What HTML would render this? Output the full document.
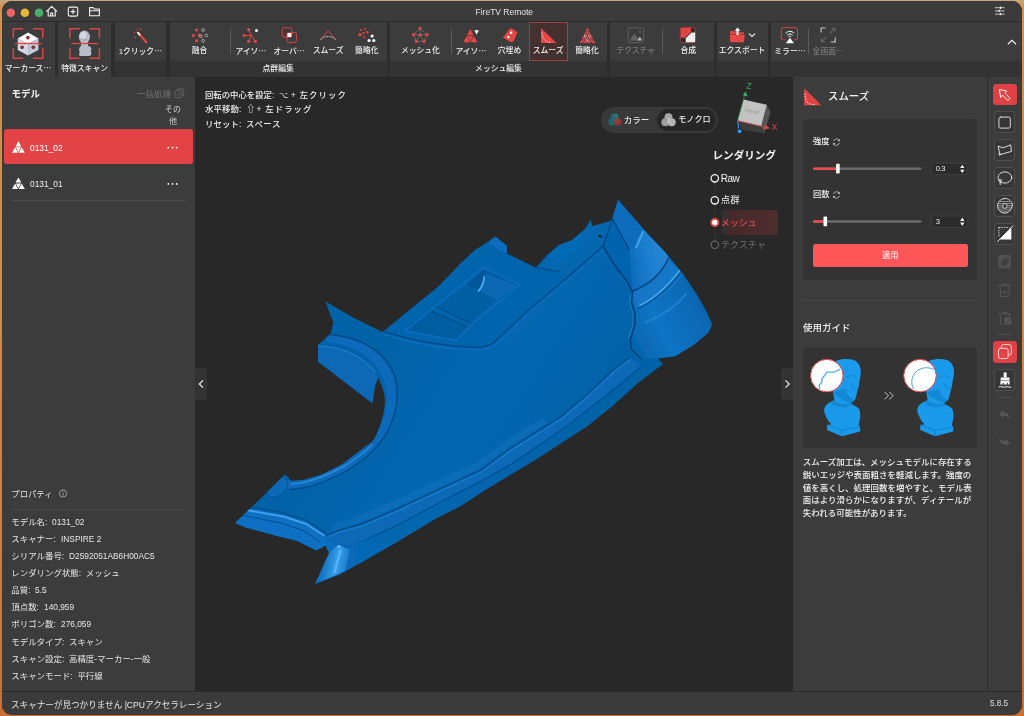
<!DOCTYPE html>
<html lang="ja">
<head>
<meta charset="utf-8">
<title>FireTV Remote</title>
<style>
*{box-sizing:border-box;margin:0;padding:0}
html,body{width:1024px;height:716px;overflow:hidden}
body{position:relative;font-family:"Liberation Sans","Noto Sans CJK JP",sans-serif;color:#e8e8e8;font-size:8px;
 background:linear-gradient(180deg,#c9a57e 0px,#d4904e 8px,#d28a44 300px,#cf7a38 600px,#cc6d33 716px);}
#win{position:absolute;left:1.500px;top:1.300px;width:1020.200px;height:713.400px;border-radius:10px;overflow:hidden;background:#3c3c3c}
#pg{position:absolute;left:-1.500px;top:-1.300px;width:1024px;height:716px;will-change:transform}
#pg div,#pg svg{position:absolute}
#pg .t{white-space:nowrap;line-height:12px;height:12px}
#pg .c{text-align:center;width:80px;margin-left:-40px}
.b{font-weight:bold}
.m{font-weight:500}
.lx{display:inline-block;font-size:1.110em;transform:scaleX(.890);transform-origin:0 70%;line-height:1}
.lc{transform-origin:50% 70%}
.v{font-size:8.400px;color:#f0f0f0}
.j{font-family:"Noto Sans CJK JP",sans-serif}
/* regions */
#title{left:0;top:0;width:1024px;height:21px;background:#3b3b3b}
#tline{left:0;top:21px;width:1024px;height:1px;background:#2a2a2a}
#tool{left:0;top:22px;width:1024px;height:55px;background:#2d2d2d}
#left{left:0;top:77px;width:195px;height:614px;background:#3c3c3c}
#view{left:195px;top:77px;width:598px;height:614px;background:#282828}
#right{left:793px;top:77px;width:194px;height:614px;background:#3c3c3c}
#rbar{left:987px;top:77px;width:37px;height:614px;background:#3c3c3c;border-left:1px solid #2c2c2c}
#sline{left:0;top:691px;width:1024px;height:1px;background:#2a2a2a}
#status{left:0;top:692px;width:1024px;height:24px;background:#3b3b3b}
/* toolbar */
.g{top:22px;height:39px;background:#3c3c3c}
.gl{top:61px;height:16px;background:#333;text-align:center;font-size:7.800px;line-height:16px;color:#ececec;font-weight:500}
.gf{top:22px;height:55px;background:#3c3c3c}
.sep{width:1px;top:29px;height:25px;background:#5c5c5c}
.tl{top:45px;font-size:7.800px;color:#f0f0f0;font-weight:500}
.dis{color:#7a7a7a}
.sel{left:529px;top:22px;width:39px;height:39px;background:#43302f;border:1px solid #9a4444}
/* left */
.row{left:4px;width:189px;height:35px;border-radius:3px}
.p{left:11.300px;font-size:8.450px;color:#e6e6e6}
/* right */
.card{background:#333;border-radius:3px}
.rb{left:993px;width:24px;height:22px;border-radius:3px;border:1px solid #5a5a5a;background:#353535}
.rb.on{background:#e04145;border-color:#e04145}
.rb.n{left:994px;width:21.400px;height:21.600px;border-color:#4e4e4e;background:#373737}
</style>
</head>
<body>
<div id="win"><div id="pg">
 <div id="title"></div><div id="tline"></div>
 <div id="tool"></div>
 <div id="left"></div>
 <div id="view"></div>
 <div id="right"></div>
 <div id="rbar"></div>
 <div id="sline"></div>
 <div id="status"></div>

<!-- 3D model -->
<svg id="model" style="left:0;top:0" width="1024" height="716" viewBox="0 0 1024 716">
 <defs>
  <linearGradient id="gMain" gradientUnits="userSpaceOnUse" x1="380" y1="330" x2="600" y2="470">
   <stop offset="0" stop-color="#0262a8"/><stop offset=".45" stop-color="#0467b0"/><stop offset="1" stop-color="#0261a6"/>
  </linearGradient>
  <linearGradient id="gCyl" gradientUnits="userSpaceOnUse" x1="632" y1="340" x2="712" y2="300">
   <stop offset="0" stop-color="#0566b0"/><stop offset=".35" stop-color="#0f74c4"/><stop offset=".75" stop-color="#0869b6"/><stop offset="1" stop-color="#0562aa"/>
  </linearGradient>
  <linearGradient id="gBand" gradientUnits="userSpaceOnUse" x1="625" y1="260" x2="675" y2="250">
   <stop offset="0" stop-color="#0a69b8"/><stop offset=".5" stop-color="#1d80d0"/><stop offset="1" stop-color="#2a8cd8"/>
  </linearGradient>
  <linearGradient id="gFoot" gradientUnits="userSpaceOnUse" x1="322" y1="560" x2="352" y2="566">
   <stop offset="0" stop-color="#0a6cbd"/><stop offset=".5" stop-color="#3a9fe8"/><stop offset="1" stop-color="#0b6dc0"/>
  </linearGradient>
  <linearGradient id="gFootFade" gradientUnits="userSpaceOnUse" x1="335" y1="0" x2="392" y2="0"><stop offset="0" stop-color="#0a6cbd"/><stop offset="1" stop-color="#0a6cbd" stop-opacity="0"/></linearGradient>
  <filter id="soft" x="-5%" y="-5%" width="110%" height="110%"><feGaussianBlur stdDeviation="0.55"/></filter>
  <clipPath id="sil"><path id="silp" d="M235,523 L265.700,493.600 L284.800,474.500 L288,477 L291,481 L304,480 L322,474.500 L342,464.500 L357,453 L372.500,441.500 C378,434 383,420 385,403.500 C385,397 384,392 382.500,388 L378.500,377.500 L375,386 L372.500,403.500 L318,361.500 L318,345 L331,333.500 L333.200,322 L325.200,301.200 L352,317 L382.500,332 L413,307 L438.500,286.500 L460,264 L475,250 L488,242 L495.500,236.500 L507,246 L507,253.500 L536,267.500 L546,256 L559,245 L572,240 L584.500,229.500 L591,219.500 L592,226 L598.500,224.500 L610,221 L612.500,218 L618,199.700 L644.600,230.600 L665.900,253.100 L682.500,273.300 L696.800,294.600 L706.300,311.300 L712.200,324.300 L708.600,332.600 L694.400,344.500 L675.400,356.300 L658,358.500 L663,364 L638,383 L612.500,406 L587,426.500 L561.500,443 L536,459.500 L511,474.500 L485.500,490 L460,506.500 L436,518.500 L398,541.500 L362,562 L339.500,574.500 L315,584 L329,553 L325.500,545.500 L316.500,550.500 L296,540.500 L278.500,536.500 L260.500,531.500 L245.500,527.500 Z"/></clipPath>
 </defs>
 <use href="#silp" fill="url(#gMain)"/>
 <g clip-path="url(#sil)"><g filter="url(#soft)" fill="none" stroke-linecap="round" stroke-linejoin="round">
  <!-- cylinder -->
  <path fill="url(#gCyl)" d="M603,246 L612.500,218 L618,199.700 L644.600,230.600 L665.900,253.100 L682.500,273.300 L696.800,294.600 L706.300,311.300 L712.200,324.300 L708.600,332.600 L694.400,344.500 L675.400,356.300 L656.400,358.700 L641,358.700 L631.500,349.200 L630.300,339.700 L635,324.300 L635,313.600 L631.500,301.800 L632.700,292.300 L628,282.800 L613.700,263.800 Z"/>
  <path fill="url(#gBand)" d="M612.500,218.700 L618,199.700 L644.600,230.600 L665.900,253.100 L668.300,257.900 C664,270 655,280 632.700,291 L628,282.800 L613.700,263.800 L603,246 Z"/>
  <path fill="#0664ad" d="M603,246 L612.500,218.700 L618,199.700 L629.100,249.600 L632.700,291 L628,282.800 L613.700,263.800 Z"/>
  <path fill="#0b6cbc" d="M618,199.700 L644.600,230.600 L636.300,248 L629.100,249.600 L612.500,218.700 Z"/>
  <path stroke="#3a9ce4" stroke-width="2.600" d="M642.800,232 L636.300,247.200"/>
  <path stroke="#04457f" stroke-width="1.300" d="M612.500,218.700 L629.100,249.600 M603,246 L612.500,219"/>
  <ellipse cx="600.400" cy="236.400" rx="2.200" ry="1.100" fill="#282828" transform="rotate(20 600.400 236.400)"/>
  <path fill="#1677c8" d="M632.700,293 C652,285 663,272 668.300,259 L682.500,273.300 C676,287 660,300 637.500,308.900 Z"/>
  <path stroke="#04457f" stroke-width="1.400" d="M632.700,291 C652,283 663,271 668.300,257.900"/>
  <path stroke="#05508f" stroke-width="1.200" d="M637.500,308.900 C656.400,300 670.700,286 681.300,272.100"/>
  <path stroke="#45a6ec" stroke-width="1.500" d="M640,305.300 C657,297 669.500,284 679.500,270.500"/>
  <path stroke="#2487d4" stroke-width="2.500" d="M646,322 C662,316 676,306 686,294" opacity=".7"/>
  <path stroke="#043f76" stroke-width="1.500" d="M603,246 L613.700,263.800 L628,282.800 L632.700,292.300 L631.500,301.800 L635,313.600 L635,324.300 L630.300,339.700 L631.500,349.200 L641,358.700"/>
  <path stroke="#1b7ccb" stroke-width="1" d="M631,294 L629.500,302 L633,313.600 L633,324 L628.500,339"/>
  <!-- box -->
  <path fill="#0465ad" d="M384.700,331.700 L413,307 L438.500,286.500 L460,264 L475,250 L488,242 L495.500,236.500 L507,246 L507,253.500 L536,267.500 L570,275 L526.400,312.100 L497,339.500 C495,342 490,346 479.500,347.300 C440,347 410,340 384.700,331.700Z"/>
  <path fill="#0a6cbc" d="M488,242 L495.500,236.500 L507,246 L507,253.500 L499,250 Z"/>
  <path fill="#035da0" d="M405.200,330.700 L431.600,311.100 L467.800,326.800 L456,340.500 Z"/>
  <path fill="#035ea2" d="M436.500,307.200 L465.800,285.700 L497,299.400 L471.700,323.800 Z"/>
  <path fill="#035798" d="M465.800,284.700 L483.400,270 L517.600,285.700 L497,300.400 Z"/>
  <path fill="#0868b4" d="M486,273 L517.600,285.700 L497,300.400 L479,291 Z"/>
  <path stroke="#4ab6ff" stroke-width="1.700" d="M484.300,277 C483.500,283 481.500,288 478.500,290.800"/>
  <path stroke="#0a6cbc" stroke-width="1.800" d="M405,331 L483.400,267.100 L519.600,284.700 L471.700,323.800 L456,340.500 Z"/>
  <path stroke="#034a85" stroke-width="1" d="M431.600,311.100 L467.800,326.800 M436.500,307.200 L471.700,323.800"/>
  <path stroke="#034a85" stroke-width="1.300" d="M384.700,331.700 C410,340 440,347 479.500,347.300 C490,346 495,342 497,339.500 L526.400,312.100 L570,275 L603,246"/>
  <path stroke="#0a6dbe" stroke-width="1.500" d="M384.700,334.200 C410,342.700 440,349.700 480,350 C491,348.700 496.500,344.700 499,341.700 L528,314.200 L571.500,277.200 L603,250"/>
  <path stroke="#034a85" stroke-width="1.200" d="M507,253.500 L536,267.500 M546,256 L536,267.500 L560,272"/>
  <path fill="#0a6cbc" d="M546,256 L559,245 L572,240 L584.500,229.500 L580,247 L560,262 Z" opacity=".6"/>
  <!-- wing + arc rim -->
  <path fill="#0868b6" d="M317.300,344.400 L317.300,361.500 L372.500,403.500 L375,386 L378.500,377.500 C365,355 345,346 317.300,344.400 Z"/>
  <path stroke="#0a6aba" stroke-width="9" d="M330,338 C372,343 392,370 391.500,398 C391,425 375,447 347,465 C325,478 305,484 288,484.500"/>
  <path stroke="#034a85" stroke-width="1.300" d="M330.500,334.500 C380,340 397,368 397.500,392 C397,428 378,452 349,469.500 C325,483 305,489 290,489.500"/>
  <path stroke="#2a8ad8" stroke-width="1.600" d="M291,484 C305,483.500 325,477 347,464.500 C357,458 365,452 372,445"/>
  <path stroke="#2080d0" stroke-width="1.200" d="M318.500,346 C345,347 362,356 375,372"/>
  <ellipse cx="277" cy="487" rx="12" ry="8.500" fill="#0768b5" stroke="#04508f" stroke-width=".9" stroke-opacity=".7" transform="rotate(-40 277 487)"/>
  <path stroke="#1478c8" stroke-opacity=".35" stroke-linecap="butt" stroke-width="7" d="M332,528 L362,518 L397,503 L435,485.500 L478,465.500 L508,443.500 L545,420"/>
  <!-- bottom trim -->
  <path fill="#0768b6" d="M325.400,536 L339.400,530.100 L362.200,523.800 L397.800,508.600 L435.800,490.800 L480,470.500 L510.800,447.900 L561.600,416.200 L587,394.600 L612.400,370.500 L628.900,357.800 L642.800,365.400 L612.400,390.800 L561.600,430.100 L510.800,464.400 L480,481.900 L435.800,504.800 L397.800,525 L362.200,541.600 L341.900,549.200 Z"/>
  <path stroke="#034a85" stroke-width="1.200" d="M325.400,536 L339.400,530.100 L362.200,523.800 L397.800,508.600 L435.800,490.800 L480,470.500 L510.800,447.900 L561.600,416.200 L587,394.600 L612.400,370.500 L628.900,357.800"/>
  <path stroke="#1a7ccc" stroke-width="1.300" d="M326,538 L340,532.100 L363,525.800 L398.500,510.600 L436.500,492.800 L481,472.500 L512,449.900 L562.600,418.200 L588,396.600 L613.400,372.500 L630,359.800"/>
  <path stroke="#044f8e" stroke-width="1.200" d="M341.900,549.200 L362.200,541.600 L397.800,525 L435.800,504.800 L480,481.900 L510.800,464.400 L561.600,430.100 L612.400,390.800 L642.800,365.400"/>
  <!-- foot -->
  <path fill="url(#gFootFade)" d="M325.400,536 L341.900,549.200 L395,527 L395,545 L339.500,574.500 L315,584 L329,553 Z"/>
  <path fill="url(#gFoot)" d="M329,553 L338,545 L350,550 L345,571 L315,584 Z"/>
  <path fill="#0c6fc2" d="M235,523 L248,508.600 L283.500,515 L306.300,522.500 L325.400,536 L329,553 L325.500,545.500 L316.500,550.500 L296,540.500 L278.500,536.500 L260.500,531.500 L245.500,527.500 Z"/>
  <path stroke="#3fa0ee" stroke-width="1.900" d="M246,510 L283.500,516.500 L306.300,524 L324,535.500"/>
  <path stroke="#034a85" stroke-width="1.100" d="M250,506.500 L284,513 L307,520.500 L326,533"/>
  <path stroke="#04508f" stroke-width="1" d="M243,515.500 L281,523 L304,531 L320,542"/>
  <path stroke="#55b4ff" stroke-width="2.400" d="M340.500,551 C338,559 336.500,565 334.500,572"/>
  <circle cx="339" cy="546.500" r="1.500" fill="#62bcff"/>
 </g></g>
</svg>

<!-- title bar -->
<svg style="left:0;top:0" width="1024" height="22" viewBox="0 0 1024 22">
 <circle cx="10.8" cy="12.8" r="4.3" fill="#ea6468"/>
 <circle cx="24.9" cy="12.8" r="4.3" fill="#e6b83a"/>
 <circle cx="39" cy="12.8" r="4.3" fill="#4caf69"/>
 <g fill="none" stroke="#f2f2f2" stroke-width="1.1" stroke-linejoin="round" stroke-linecap="round">
  <path d="M46.600,11.300 L51.700,6.300 L56.800,11.300 M48.200,10.600 V16 H55.200 V10.600 M50.700,16 V13 H52.700 V16"/>
  <rect x="68.300" y="7.100" width="9.400" height="9" rx="1.600"/>
  <path d="M73,9.600 V13.600 M71,11.600 H75"/>
  <path d="M89.600,15.800 V7.600 H93.200 L94.400,9 H99.400 V15.800 Z M89.600,10.800 H99.400"/>
 </g>
 <g stroke="#c8c8c8" stroke-width="1" fill="none">
  <path d="M995,7.700 H1004.500 M995,10.900 H1004.500 M995,14.100 H1004.500"/>
  <path d="M1000.500,6.500 V8.900 M999.200,9.700 V12.100 M1000.500,12.900 V15.300" stroke="#f0f0f0" stroke-width="1.200"/>
 </g>
</svg>
<div class="t c" style="left:504.500px;top:5.500px;font-size:8.600px;color:#e4e4e4"><span class="lx lc">FireTV Remote</span></div>

<!-- toolbar groups -->
<div class="gf" style="left:0;width:54.500px"></div>
<div class="gf" style="left:58px;width:53px"></div>
<div class="g" style="left:115px;width:51px"></div><div class="gl" style="left:115px;width:51px"></div>
<div class="g" style="left:169.500px;width:217.300px"></div><div class="gl" style="left:169.500px;width:217.300px">点群編集</div>
<div class="g" style="left:390px;width:217px"></div><div class="gl" style="left:390px;width:217px">メッシュ編集</div>
<div class="g" style="left:610px;width:103.700px"></div><div class="gl" style="left:610px;width:103.700px"></div>
<div class="g" style="left:717px;width:51px"></div><div class="gl" style="left:717px;width:51px"></div>
<div class="g" style="left:771.300px;width:253px"></div><div class="gl" style="left:771.300px;width:253px"></div>
<div class="sel"></div>
<div class="sep" style="left:230.300px"></div>
<div class="sep" style="left:451px"></div>
<div class="sep" style="left:661.500px"></div>
<div class="sep" style="left:808.200px"></div>
<!-- labels -->
<div class="t c tl" style="left:28px;top:62.200px">マーカース<span class="j">…</span></div>
<div class="t c tl" style="left:84.600px;top:63px">特徴スキャン</div>
<div class="t c tl" style="left:140.300px">1クリック<span class="j">…</span></div>
<div class="t c tl" style="left:199.500px">融合</div>
<div class="t c tl" style="left:250.800px">アイソ<span class="j">…</span></div>
<div class="t c tl" style="left:289px">オーバ<span class="j">…</span></div>
<div class="t c tl" style="left:328.200px">スムーズ</div>
<div class="t c tl" style="left:366.800px">簡略化</div>
<div class="t c tl" style="left:420.400px">メッシュ化</div>
<div class="t c tl" style="left:470.800px">アイソ<span class="j">…</span></div>
<div class="t c tl" style="left:509.500px">穴埋め</div>
<div class="t c tl" style="left:548.200px">スムーズ</div>
<div class="t c tl" style="left:587px">簡略化</div>
<div class="t c tl dis" style="left:635.800px">テクスチャ</div>
<div class="t c tl b" style="left:688.200px">合成</div>
<div class="t c tl b" style="left:742px">エクスポート</div>
<div class="t c tl b" style="left:789.900px">ミラー<span class="j">…</span></div>
<div class="t c tl dis" style="left:828.200px">全画面<span class="j">…</span></div>
<!-- icons -->
<svg style="left:0;top:22px" width="1024" height="40" viewBox="0 22 1024 40">
 <!-- marker scan -->
 <g fill="none" stroke="#de4343" stroke-width="1.500" stroke-linejoin="round" stroke-linecap="round">
  <path d="M13.300,37.500 V28.800 H22.500 M33.500,28.800 H42.800 V37.500 M42.800,49 V58.200 H33.500 M22.500,58.200 H13.300 V49"/>
  <path d="M69.900,37.500 V28.800 H79.100 M90.100,28.800 H99.400 V37.500 M99.400,49 V58.200 H90.100 M79.100,58.200 H69.900 V49"/>
 </g>
 <path d="M28.100,32.400 L38.500,38.400 L28.100,44 L17.700,38.400 Z" fill="#fbfbfd"/>
 <path d="M17.700,38.400 L28.100,44 V55.400 L17.700,49.900 Z" fill="#d4d8e6"/>
 <path d="M38.500,38.400 L28.100,44 V55.400 L38.500,49.900 Z" fill="#c3c7dc"/>
 <g fill="#c02a2a" stroke="#5a1515" stroke-width=".8"><circle cx="27.900" cy="37.700" r="1.400"/><circle cx="22.100" cy="47.300" r="1.400"/><circle cx="33.300" cy="47.300" r="1.400"/></g>
 <path d="M14.700,43.500 H41.700" stroke="#e04545" stroke-width="1.300"/>
 <!-- bust -->
 <g fill="#b9bcc6">
  <ellipse cx="84.400" cy="37" rx="5.600" ry="6.400"/>
  <path d="M81.300,42 H87.500 L88.200,46 C91.500,46.500 92,49 90.800,52 C92,53 91.500,55.500 89.500,56 H80.500 C78.500,55.500 78.700,53.500 79.800,52.500 C78.500,49.500 79,47 81,46 Z"/>
 </g>
 <ellipse cx="83.200" cy="35.600" rx="3.400" ry="3.800" fill="#d3d6de"/>
 <path d="M81.500,38.200 C82.500,40.800 85.500,40.800 87,38.500" stroke="#8e929e" stroke-width=".8" fill="none"/>
 <path d="M71.300,43.500 H98" stroke="#e04545" stroke-width="1.300"/>
 <!-- wand -->
 <path d="M138.200,33 L146.400,42.200" stroke="#e04545" stroke-width="2.200" stroke-linecap="round"/>
 <path d="M137.800,32.600 L139.800,34.800" stroke="#fff" stroke-width="1.600" stroke-linecap="round"/>
 <g fill="#e04545"><circle cx="134.400" cy="32.400" r=".8"/><circle cx="140.500" cy="29.200" r=".9"/><circle cx="135.200" cy="37.400" r=".8"/><circle cx="136.600" cy="29.600" r=".6"/></g>
 <!-- fuse -->
 <g fill="#e84545"><circle cx="196.600" cy="30" r="1.600"/><circle cx="193.500" cy="35.500" r="1.600"/><circle cx="199.300" cy="35.100" r="1.600"/><circle cx="196.600" cy="40.800" r="1.600"/></g>
 <g fill="none" stroke="#b8b8b8" stroke-width=".8"><circle cx="203.100" cy="30" r="1.400"/><circle cx="206.400" cy="35.500" r="1.400"/><circle cx="200.900" cy="36.300" r="1.400"/><circle cx="203.100" cy="40.800" r="1.400"/></g>
 <!-- isolated pts -->
 <g stroke="#e84545" stroke-width="1" fill="none"><path d="M248.600,29.600 L251.500,35.500 L255.400,41.300 M244.200,35.500 H251.500 L248.600,41.300"/></g>
 <g fill="#e84545"><circle cx="248.600" cy="29.600" r="1.600"/><circle cx="244.200" cy="35.500" r="1.600"/><circle cx="248.600" cy="41.300" r="1.600"/><circle cx="255.400" cy="41.300" r="1.600"/></g>
 <circle cx="256.500" cy="30.400" r="1.500" fill="#fff"/>
 <!-- overlap -->
 <g fill="none" stroke="#d84444" stroke-width="1"><rect x="282.200" y="27.700" width="9.700" height="9.600" rx="2"/><rect x="286.900" y="32.600" width="9.700" height="9.800" rx="2"/></g>
 <rect x="287.400" y="33.100" width="4" height="3.900" fill="#fff"/>
 <!-- smooth pts -->
 <path d="M320.200,39.800 L328.100,30.800 L336.100,39.800" fill="none" stroke="#d84444" stroke-width="1"/>
 <path d="M320.600,39.700 C324,35.300 332,35.300 335.700,39.700" fill="none" stroke="#ddd" stroke-width="1" stroke-dasharray="1.300 1"/>
 <!-- simplify pts -->
 <g fill="#e84545"><circle cx="360.700" cy="30" r="1.100"/><circle cx="364.800" cy="28.800" r="1"/><circle cx="363.500" cy="33.100" r="1.200"/><circle cx="367.400" cy="32.300" r="1.200"/><circle cx="360" cy="34.700" r="1.600"/><circle cx="364.200" cy="37.300" r="1"/></g>
 <g fill="#fff"><circle cx="372.100" cy="36.100" r="1.600"/><circle cx="369.100" cy="40.500" r="1.600"/><circle cx="373.800" cy="40.500" r="1.600"/></g>
 <!-- mesh-ify -->
 <path d="M420.200,28.400 L427.200,34.700 L424,41.300 H416.400 L413.500,34.700 Z M420.200,28.400 V34.900 M413.500,34.700 L420.200,34.900 L427.200,34.700 M416.400,41.300 L420.200,34.900 L424,41.300" fill="none" stroke="#9a9a9a" stroke-width=".8" stroke-dasharray="1.200 .9"/>
 <g fill="#e84545"><circle cx="420.200" cy="28.400" r="1.600"/><circle cx="413.500" cy="34.700" r="1.600"/><circle cx="427.200" cy="34.700" r="1.600"/><circle cx="416.400" cy="41.300" r="1.600"/><circle cx="424" cy="41.300" r="1.600"/><circle cx="420.200" cy="34.900" r="1.600"/></g>
 <!-- isolated mesh -->
 <path d="M470.300,29 L477.300,42.200 H463.300 Z" fill="#e84545"/>
 <path d="M466.800,35.600 H473.800 L470.300,42.200 Z" fill="none" stroke="#3c3c3c" stroke-width=".7"/>
 <path d="M474.400,30.200 H478.800 L476.600,34.700 Z" fill="#fff"/>
 <!-- fill hole -->
 <path d="M502,37.600 C506,35 507.500,30.500 510.200,28.400 C513,28 515.500,32 517.800,32 C515.500,35.500 515.500,39.500 512.500,41.900 C508.500,42.500 505.500,38 502,37.600 Z" fill="#e84545"/>
 <circle cx="511.100" cy="32.800" r="1.300" fill="#fff"/><circle cx="508.400" cy="37" r="1.300" fill="#fff"/>
 <!-- smooth mesh -->
 <path d="M541,28.100 V43.100 H556.500 Z" fill="#e84545"/>
 <path d="M541.800,32.500 C542.300,39 545.500,42.200 551,42.400" fill="none" stroke="#eee" stroke-width=".9" stroke-dasharray="1.200 1"/>
 <!-- simplify mesh -->
 <path d="M587.400,27.600 L595.200,43.100 H579.700 Z" fill="#e84545"/>
 <path d="M585.500,31.500 H589.300 M583.600,35.300 H591.200 M581.700,39.200 H593.100 M583.600,35.300 L587.400,43.100 L591.200,35.300 M585.500,31.500 L591.200,43.100 M589.300,31.500 L583.600,43.100 M581.700,39.200 L583.600,43.100 M593.100,39.200 L591.200,43.100" fill="none" stroke="#3c3c3c" stroke-width=".6"/>
 <path d="M584.200,35.700 H590.600 L587.400,41.800 Z" fill="none" stroke="#eee" stroke-width=".8" stroke-dasharray="1 .9"/>
 <!-- texture (disabled) -->
 <rect x="628.100" y="27.800" width="15.600" height="14.800" rx="2" fill="none" stroke="#5e5e5e" stroke-width="1"/>
 <path d="M629.300,40.600 L634.500,33.600 L639,40.600 Z" fill="#626262"/><path d="M637.200,40.600 L639.800,36.800 L642.300,40.600 Z" fill="#b4b4b4"/>
 <circle cx="639.900" cy="31.600" r="1.200" fill="#5e5e5e"/>
 <!-- compose -->
 <rect x="680.300" y="27.500" width="15.200" height="15.200" rx="2.200" fill="#2c2c2c" stroke="#c03c3c" stroke-width=".8"/>
 <path d="M680.700,27.900 H691 V32 L685.200,37.800 H680.700 Z" fill="#e04444"/>
 <path d="M695.100,32.600 H691.600 L685.700,38.300 V42.300 H695.100 Z" fill="#ededed"/>
 <!-- export -->
 <path d="M730,31 H734.500 L735.500,32.200 H744 V34.500 H730 Z" fill="#e04444"/>
 <path d="M729.700,35 H744.800 L743.800,42.200 H730.400 Z" fill="#e84848"/>
 <path d="M737.500,27.600 L740.300,30.800 H738.500 V35 H736.500 V30.800 H734.700 Z" fill="#fff"/>
 <path d="M748.900,33.600 L752,36.500 L755.100,33.600" fill="none" stroke="#eee" stroke-width="1.100"/>
 <!-- mirror -->
 <path d="M785.500,39.800 H783 Q781.300,39.800 781.300,38 V29.400 Q781.300,27.700 783,27.700 H795.800 Q797.500,27.700 797.500,29.400 V38 Q797.500,39.800 795.800,39.800 H794.200" fill="none" stroke="#d84444" stroke-width="1"/>
 <path d="M785.800,43.300 H794 L789.900,37.700 Z" fill="#fff"/>
 <g fill="none" stroke="#fff" stroke-width="1"><path d="M785.600,33.300 C788,30.700 791.800,30.700 794.200,33.300"/><path d="M787.200,35.200 C788.700,33.600 791.100,33.600 792.600,35.200"/><path d="M788.600,36.900 C789.400,36.200 790.400,36.200 791.200,36.900"/></g>
 <!-- fullscreen (disabled) -->
 <g fill="none" stroke-width="1.100"><path d="M821.100,32.500 V28 H825.600 M835.200,37.500 V42 H830.700" stroke="#c8c8c8"/><path d="M829.800,33.400 L835,28.200 M831.500,28.200 H835 V31.700 M826.500,36.600 L821.300,41.800 M821.300,38.300 V41.800 H824.800" stroke="#666"/></g>
 <!-- collapse chevron -->
 <path d="M1007.800,44.300 L1011.900,40.300 L1016,44.300" fill="none" stroke="#eee" stroke-width="1.200"/>
</svg>

<!-- left panel -->
<div class="t b" style="left:11.500px;top:88.300px;font-size:9.500px;color:#f2f2f2">モデル</div>
<div class="t" style="left:137px;top:88.300px;font-size:8.500px;color:#767676">一括処理</div>
<svg style="left:173px;top:87px" width="13" height="13" viewBox="173 87 13 13"><g fill="none" stroke="#666" stroke-width=".9"><rect x="174.800" y="90.700" width="7" height="7" rx="1.500"/><path d="M177,90.500 V89.800 Q177,89 177.800,89 H182.800 Q183.700,89 183.700,89.800 V94.800 Q183.700,95.700 182.800,95.700 H182"/><path d="M176.800,94.200 L178,95.500 L180,92.900"/></g></svg>
<div class="t" style="left:165px;top:103.600px;font-size:8px;color:#cfcfcf">その</div>
<div class="t" style="left:169px;top:116px;font-size:8px;color:#cfcfcf">他</div>
<div class="row" style="top:129px;background:#e24446"></div>
<svg style="left:0;top:129px" width="195" height="72" viewBox="0 129 195 72">
 <g fill="#fff">
  <path d="M18.400,141.200 L21.300,146.400 H15.500 Z M15.100,147.200 L18,152.700 H12 Z M21.700,147.200 L24.800,152.700 H18.800 Z M18.400,152 L15.900,147.300 H20.900 Z"/>
  <path d="M18.400,177.400 L21.300,182.600 H15.500 Z M15.100,183.400 L18,188.900 H12 Z M21.700,183.400 L24.800,188.900 H18.800 Z M18.400,188.200 L15.900,183.500 H20.900 Z"/>
  <circle cx="168.300" cy="147.600" r=".9"/><circle cx="172.500" cy="147.600" r=".9"/><circle cx="176.700" cy="147.600" r=".9"/>
  <circle cx="168.300" cy="183.900" r=".9"/><circle cx="172.500" cy="183.900" r=".9"/><circle cx="176.700" cy="183.900" r=".9"/>
 </g>
</svg>
<div class="t" style="left:30.300px;top:141.600px;font-size:8.500px;color:#fff"><span class="lx">0131_02</span></div>
<div class="t" style="left:30.300px;top:177.800px;font-size:8.500px;color:#f0f0f0"><span class="lx">0131_01</span></div>
<div style="left:11px;top:200px;width:174px;height:1px;background:#4b4b4b"></div>
<div class="t" style="left:11.300px;top:488px;font-size:8.360px;color:#e0e0e0">プロパティ</div>
<svg style="left:58px;top:488px" width="11" height="11" viewBox="58 488 11 11"><circle cx="63" cy="493.500" r="3.600" fill="none" stroke="#b0b0b0" stroke-width=".8"/><path d="M63,492.800 V495.600 M63,491.300 V491.900" stroke="#b0b0b0" stroke-width=".9"/></svg>
<div style="left:11px;top:509px;width:174px;height:1px;background:#4b4b4b"></div>
<div class="t p" style="top:515.500px">モデル名:&nbsp; <span class="lx">0131_02</span></div>
<div class="t p" style="top:532.700px">スキャナー:&nbsp; <span class="lx">INSPIRE 2</span></div>
<div class="t p" style="top:549.800px">シリアル番号:&nbsp; <span class="lx">D2592051AB6H00AC5</span></div>
<div class="t p" style="top:567px">レンダリング状態:&nbsp; メッシュ</div>
<div class="t p" style="top:584.100px">品質:&nbsp; <span class="lx">5.5</span></div>
<div class="t p" style="top:601.300px">頂点数:&nbsp; <span class="lx">140,959</span></div>
<div class="t p" style="top:618.400px">ポリゴン数:&nbsp; <span class="lx">276,059</span></div>
<div class="t p" style="top:635.600px">モデルタイプ:&nbsp; スキャン</div>
<div class="t p" style="top:652.700px">スキャン設定:&nbsp; 高精度-マーカー-一般</div>
<div class="t p" style="top:669.900px">スキャンモード:&nbsp; 平行線</div>
<!-- left collapse handle -->
<div style="left:195px;top:368px;width:12px;height:32px;background:#333;border-radius:0 3px 3px 0"></div>
<svg style="left:195px;top:368px" width="12" height="32" viewBox="195 368 12 32"><path d="M203,380.300 L199.300,384 L203,387.700" fill="none" stroke="#eee" stroke-width="1.200"/></svg>
<!-- status -->
<div class="t" style="left:11px;top:698.500px;font-size:8.580px;color:#e6e6e6">スキャナーが見つかりません |CPUアクセラレーション</div>
<div class="t" style="left:989.500px;top:698.300px;font-size:8.200px;color:#e0e0e0"><span class="lx">5.8.5</span></div>

<!-- viewport overlays -->
<div class="t m v" style="left:205px;top:88.800px">回転の中心を設定:</div>
<div class="t m v" style="left:279px;top:88.800px;font-size:8.400px">⌥</div>
<div class="t m v" style="left:290.800px;top:88.800px">+</div>
<div class="t m v" style="left:299.500px;top:88.800px;letter-spacing:1.100px">左クリック</div>
<div class="t m v" style="left:205px;top:103.300px;letter-spacing:.1px">水平移動:</div>
<div class="t m v" style="left:246.300px;top:103.300px;font-size:9px">⇧</div>
<div class="t m v" style="left:256.500px;top:103.300px">+</div>
<div class="t m v" style="left:265.200px;top:103.300px;letter-spacing:1.100px">左ドラッグ</div>
<div class="t m v" style="left:205px;top:117.800px;letter-spacing:.1px">リセット:</div>
<div class="t m v" style="left:246px;top:117.800px;letter-spacing:.6px">スペース</div>
<!-- colour / mono toggle -->
<div style="left:600.700px;top:106.800px;width:117.500px;height:26.200px;border-radius:13.100px;background:#393939"></div>
<div style="left:656.700px;top:108.800px;width:59.500px;height:22.400px;border-radius:11.200px;background:#262626"></div>
<svg style="left:600px;top:106px" width="120" height="28" viewBox="600 106 120 28">
 <circle cx="614.800" cy="117.200" r="3.900" fill="#1f6b72"/><circle cx="612.200" cy="121.800" r="3.900" fill="#1c6d78" opacity=".9"/><circle cx="617.600" cy="121.800" r="3.700" fill="#9a3a3a" opacity=".9"/>
 <circle cx="616.500" cy="115.500" r="1.300" fill="#3a8a58"/>
 <circle cx="668.500" cy="117.300" r="4" fill="#a8a8a8"/><circle cx="665.300" cy="122.300" r="4" fill="#9c9c9c"/><circle cx="671.700" cy="122.300" r="4" fill="#b4b4b4"/>
 <path d="M668.500,117.800 V121 M668.500,121 L666,123.500 M668.500,121 L671,123.500" stroke="#d8d8d8" stroke-width=".9" fill="none"/>
</svg>
<div class="t m" style="left:623.800px;top:114px;font-size:8.500px;color:#e6e6e6">カラー</div>
<div class="t m" style="left:678.200px;top:114px;font-size:8.100px;color:#f0f0f0">モノクロ</div>
<!-- gizmo -->
<svg style="left:730px;top:78px" width="56" height="60" viewBox="730 78 56 60">
 <path d="M737.700,120.700 L761.200,126.200 L764.300,133.400 L741.800,129.700 Z" fill="#3d3d3d"/>
 <path d="M766.800,104.700 L770.500,112 L764.300,133.400 L761.200,126.200 Z" fill="#555"/>
 <path d="M743.800,99.600 L766.800,104.700 L761.200,126.200 L737.700,120.700 Z" fill="#c2c2c2"/>
 <path d="M737.700,120.500 L744.500,95.500" stroke="#35b56a" stroke-width="1" stroke-dasharray="1.500 1"/>
 <path d="M745.500,91.500 L747.800,96.600 L742.700,95.300 Z" fill="#35b56a"/>
 <path d="M737.700,120.700 L766,127.400" stroke="#e04545" stroke-width="1.100" stroke-dasharray="1.800 .8"/>
 <path d="M769.800,128.300 L764.300,129.600 L765.500,124.600 Z" fill="#e04545"/>
 <path d="M737.700,121 L738.600,128.500" stroke="#2a9df4" stroke-width="1.100"/>
 <circle cx="739.600" cy="131.300" r="1.900" fill="#2a9df4"/>
 <text x="746.300" y="89" font-family="Liberation Sans,sans-serif" font-size="8.500" fill="#35b56a" transform="rotate(8 749 86)">Z</text>
 <text x="771.500" y="130" font-family="Liberation Sans,sans-serif" font-size="9" fill="#e04545">X</text>
 <text x="744.800" y="113" font-family="Liberation Sans,sans-serif" font-size="4.300" fill="#8a8a8a" transform="rotate(13 752 112)">FRONT</text>
</svg>
<!-- rendering -->
<div class="t b" style="left:712.500px;top:148.800px;font-size:10.600px;color:#f4f4f4">レンダリング</div>
<div style="left:722px;top:210px;width:55.500px;height:24.500px;border-radius:2px;background:linear-gradient(90deg,#333030 0,#353030 9%,#44292a 10%,#4b2b2c 50%,#502c2d 100%)"></div>
<svg style="left:708px;top:170px" width="14" height="84" viewBox="708 170 14 84">
 <path d="M714.800,183 V240" stroke="#484848" stroke-width=".8" stroke-dasharray="1 1.500"/>
 <circle cx="714.800" cy="178.300" r="3.700" fill="#282828" stroke="#f0f0f0" stroke-width="1.300"/>
 <circle cx="714.800" cy="200.300" r="3.700" fill="#282828" stroke="#f0f0f0" stroke-width="1.300"/>
 <circle cx="714.800" cy="222.500" r="3.600" fill="#fff" stroke="#e04a4c" stroke-width="1.900"/>
 <circle cx="714.800" cy="244.800" r="3.700" fill="#282828" stroke="#6a6a6a" stroke-width="1.100"/>
</svg>
<div class="t" style="left:720.800px;top:172.600px;font-size:10px;letter-spacing:-.5px;color:#f4f4f4">Raw</div>
<div class="t" style="left:720.800px;top:194.300px;font-size:9.400px;color:#f0f0f0">点群</div>
<div class="t m" style="left:720.800px;top:216.500px;font-size:9px;color:#e84a4c">メッシュ</div>
<div class="t" style="left:721px;top:238.800px;font-size:9px;color:#6e6e6e">テクスチャ</div>
<!-- right collapse handle -->
<div style="left:781px;top:368px;width:12px;height:32px;background:#333;border-radius:3px 0 0 3px"></div>
<svg style="left:781px;top:368px" width="12" height="32" viewBox="781 368 12 32"><path d="M785.500,380.300 L789.200,384 L785.500,387.700" fill="none" stroke="#eee" stroke-width="1.200"/></svg>

<!-- right panel -->
<svg style="left:803px;top:87px" width="20" height="20" viewBox="803 87 20 20">
 <path d="M804.200,88.300 V105.200 H821.400 Z" fill="#e24446"/>
 <path d="M804.900,93.500 C804.900,101 806.600,104.500 815,104.700" fill="none" stroke="#eee" stroke-width=".9" stroke-dasharray="1.300 1"/>
</svg>
<div class="t m" style="left:828px;top:90.600px;font-size:10.400px;color:#f4f4f4">スムーズ</div>
<div class="card" style="left:803.400px;top:119.300px;width:174px;height:160.800px"></div>
<div class="t m" style="left:813px;top:136px;font-size:8.200px;color:#ececec">強度</div>
<div class="t m" style="left:813px;top:188.800px;font-size:8.200px;color:#ececec">回数</div>
<svg style="left:803px;top:119px" width="175" height="162" viewBox="803 119 175 162">
 <g fill="none" stroke="#c4c4c4" stroke-width=".8">
  <path d="M833.600,141.300 A3,3 0 0 1 839,140.200 M839.300,142.800 A3,3 0 0 1 833.800,144.100"/>
  <path d="M833.600,194.100 A3,3 0 0 1 839,193 M839.300,195.600 A3,3 0 0 1 833.800,196.900"/>
 </g>
 <g fill="#c4c4c4"><path d="M839.800,138.800 V141.200 H837.400 Z M833,145.500 V143.100 H835.400 Z M839.800,191.600 V194 H837.400 Z M833,198.300 V195.900 H835.400 Z"/></g>
 <rect x="813" y="167.500" width="108.500" height="2.400" rx="1.200" fill="#6c6c6c"/>
 <rect x="813" y="167.500" width="25" height="2.400" rx="1.200" fill="#f04a4c"/>
 <rect x="836.100" y="163.700" width="3.600" height="9.800" rx=".8" fill="#fff"/>
 <rect x="813" y="220.300" width="108.500" height="2.400" rx="1.200" fill="#6c6c6c"/>
 <rect x="813" y="220.300" width="12" height="2.400" rx="1.200" fill="#f04a4c"/>
 <rect x="823.500" y="216.500" width="3.600" height="9.800" rx=".8" fill="#fff"/>
 <rect x="931.600" y="163.200" width="36.200" height="11.400" rx="1.500" fill="#2b2b2b" stroke="#454545" stroke-width=".8"/>
 <rect x="931.600" y="216" width="36.200" height="11.400" rx="1.500" fill="#2b2b2b" stroke="#454545" stroke-width=".8"/>
 <g fill="#f0f0f0"><path d="M962.300,164.700 L964.500,168.100 H960.100 Z M962.300,173.100 L964.500,169.700 H960.100 Z M962.300,217.500 L964.500,220.900 H960.100 Z M962.300,225.900 L964.500,222.500 H960.100 Z"/></g>
</svg>
<div class="t" style="left:935.800px;top:163.200px;font-size:7.600px;letter-spacing:-.4px;color:#ececec">0.3</div>
<div class="t" style="left:935.800px;top:216px;font-size:7.600px;color:#ececec">3</div>
<div style="left:812.700px;top:243.500px;width:155.200px;height:23.100px;border-radius:2.500px;background:#fd5658"></div>
<div class="t c" style="left:890.300px;top:250.200px;font-size:8.200px;color:#fff">適用</div>
<div style="left:803.400px;top:300.400px;width:173.500px;height:1px;background:#484848"></div>
<div class="t m" style="left:802.900px;top:321.800px;font-size:9.500px;color:#f0f0f0">使用ガイド</div>
<div class="card" style="left:803.400px;top:347.700px;width:173.500px;height:100px"></div>
<svg style="left:803px;top:347px" width="175" height="102" viewBox="803 347 175 102">
 <defs>
  <g id="bust">
   <path d="M836,361 C840,359 848,358.500 852.800,359.700 C856.500,361 858.800,363 859.400,365.500 C860.500,368 861,371 860.800,374.300 L859.400,381.600 L858.600,387.500 L857.900,389 L857,392.500 L856.400,395.600 L855,400 L850.600,402.900 L852.800,405.100 C855.500,406 858,407.500 859.400,409.500 C860.200,412 860.300,415 860.100,418.300 L858.600,424.900 L860.100,427.100 L860.100,431.500 L841.800,436.200 L827.100,430 L827.100,424.900 L831.500,424.200 C828.500,421.500 826.500,418.500 825.700,415.400 C824.500,413.500 824,411.500 824.200,409.500 C824.800,407 826,405 827.900,403.600 L834.400,400 L833,391.900 L830,380 Z" fill="#1a9aea"/>
   <path d="M834.400,400 C838,404 846,405 850.600,402.900 L852.800,405.100 C847,408.500 838,408 831,404.200 Z" fill="#1489d6"/>
   <path d="M827.100,424.900 L841.800,430.300 L860.100,427.100 M841.800,430.300 V436" stroke="#0f7cc6" stroke-width=".9" fill="none"/>
   <path d="M833,391.900 C836,396 842,399.500 850.600,402.900 L855,400 C849,398 846,394 846.500,389 Z" fill="#1287d4"/>
   <path d="M846,377 L852,375.500 L856.500,377.500 M851,383 L853,388 L857.900,389" stroke="#1080cc" stroke-width=".8" fill="none"/>
  </g>
 </defs>
 <use href="#bust"/>
 <use href="#bust" x="93.200"/>
 <circle cx="826.800" cy="375.600" r="16.300" fill="#fff" stroke="#d84446" stroke-width="1"/>
 <circle cx="920" cy="375.600" r="16.300" fill="#fff" stroke="#d84446" stroke-width="1"/>
 <path d="M819.800,389 L819.100,385.300 L821.700,382.400 L822,378.700 L827.100,372.100 L834.400,372.100 L840.300,369.200" fill="none" stroke="#58b2ec" stroke-width="1.400"/>
 <path d="M913.500,389 C907.500,377 918,364.500 931.500,368.500 C935,369.500 936.500,371 936.500,371" fill="none" stroke="#4aa3dc" stroke-width="1"/>
 <path d="M884.500,391.800 L888.300,395.600 L884.500,399.400 M889.300,391.800 L893.100,395.600 L889.300,399.400" fill="none" stroke="#c8c8c8" stroke-width="1"/>
</svg>
<div class="t m" style="left:802.800px;top:456.300px;font-size:8.480px;color:#f0f0f0">スムーズ加工は、メッシュモデルに存在する</div>
<div class="t m" style="left:802.800px;top:468.900px;font-size:8.480px;color:#f0f0f0">鋭いエッジや表面粗さを軽減します。強度の</div>
<div class="t m" style="left:802.800px;top:481.500px;font-size:8.480px;color:#f0f0f0">値を高くし、処理回数を増やすと、モデル表</div>
<div class="t m" style="left:802.800px;top:494.100px;font-size:8.480px;color:#f0f0f0">面はより滑らかになりますが、ディテールが</div>
<div class="t m" style="left:802.800px;top:506.700px;font-size:8.480px;color:#f0f0f0">失われる可能性があります。</div>

<!-- right tool bar -->
<div class="rb on" style="top:83.700px;height:21.400px"></div>
<div class="rb n" style="top:111.300px"></div>
<div class="rb n" style="top:139.300px"></div>
<div class="rb n" style="top:167.200px"></div>
<div class="rb n" style="top:195.100px"></div>
<div class="rb n" style="top:223px"></div>
<div class="rb on" style="top:340.900px;height:21.700px"></div>
<div class="rb n" style="top:369px"></div>
<div style="left:998.200px;top:334px;width:13.500px;height:1px;background:#505050"></div>
<div style="left:998.200px;top:396.500px;width:13.500px;height:1px;background:#505050"></div>
<svg style="left:988px;top:78px" width="34" height="380" viewBox="988 78 34 380">
 <g fill="none" stroke="#f2f2f2" stroke-width="1" stroke-linejoin="round" stroke-linecap="round">
  <path d="M999.700,89.600 L1006.600,90.900 L1004.800,92.900 L1010.100,98.300 L1007.900,100.600 L1002.600,95.200 L1001,97.200 Z"/>
 </g>
 <g fill="none" stroke="#dcdcdc" stroke-width="1" stroke-linejoin="round" stroke-linecap="round">
  <rect x="998.900" y="117.100" width="11.400" height="11" rx="1.500"/>
  <path d="M999.800,154.300 L998.200,146 L1002.900,147.900 L1010.700,144.800 L1011.400,151 Z"/><circle cx="999.700" cy="154.300" r=".9"/>
  <ellipse cx="1004.900" cy="177.500" rx="6.900" ry="5.600"/><path d="M998.600,180.300 C999.500,178.800 1001.500,179.200 1001.800,180.700 C1001.800,182.200 999.500,182.600 998.800,181.300 M1000.200,180.500 V184.600"/>
  <path d="M1004,198.600 C1008,197.600 1010,201 1012,202.600 C1013.200,206 1011,210.500 1007.500,212.500 C1003,214.500 998,211 997.600,206.500 C997.300,202.500 1000,199.300 1004,198.600 Z"/>
 </g>
 <g stroke="#cfcfcf" stroke-width=".6" fill="none"><path d="M999.500,201.500 H1009.500 M998,203.500 H1011.500 M997.800,205.700 H1012.500 M998,207.900 H1012 M999,210 H1010.800 M1001.200,212 H1008"/></g>
 <circle cx="1004.900" cy="206" r="2.300" fill="#353535" stroke="#dcdcdc" stroke-width=".8"/>
 <path d="M1011.400,227.400 V239.500 H999.700 Z" fill="#fff"/>
 <path d="M997.300,241.800 L1013.200,225.700" stroke="#eee" stroke-width="1"/>
 <path d="M998.900,227.400 H1009.500 M998.900,227.400 V237.500" stroke="#dcdcdc" stroke-width="1" stroke-dasharray="1.400 1.100" fill="none"/>
 <!-- disabled -->
 <rect x="998.100" y="255.100" width="12.900" height="13.200" rx="1.300" fill="#505050"/>
 <path d="M1001,265.500 C1000.500,260 1004,257.500 1009,257.800 C1009.200,262.500 1006,265.800 1001,265.500 Z" fill="#3c3c3c"/>
 <path d="M1000,266.600 L1009.500,257.200" stroke="#505050" stroke-width=".8"/>
 <g fill="none" stroke="#565656" stroke-width="1" stroke-linejoin="round">
  <path d="M998.600,285.600 H1011 M1000,285.600 L1000.800,296.400 H1008.800 L1009.600,285.600 M1002.600,285.400 V284 H1007 V285.400 M1003,291 V293.600 M1004.800,291 V293.600 M1006.600,291 V293.600"/>
  <path d="M998.600,313.900 H1011 M1000,313.900 L1000.800,324.700 H1003.500 M1009.600,313.900 L1009.400,316.800 M1002.600,313.700 V312.300 H1007 V313.700"/>
 </g>
 <rect x="1004.300" y="317.500" width="7" height="7" rx=".8" fill="#565656"/>
 <path d="M1006.300,322.600 L1009.300,319.500" stroke="#3c3c3c" stroke-width="1"/>
 <!-- multi-select (on) -->
 <g fill="none" stroke="#f6dada" stroke-width="1"><rect x="1001.300" y="344.600" width="10" height="10.600" rx="2.200"/><rect x="998.500" y="348.300" width="9.600" height="10.300" rx="2.200" fill="#e04145"/></g>
 <path d="M1001.300,353.800 H1001.900 M1003.400,355.300 H1004 " stroke="#f0c060" stroke-width=".8"/>
 <!-- brush -->
 <g fill="#f4f4f4"><rect x="1003.600" y="372.200" width="3.100" height="5.600" rx="1.200"/><rect x="1000.700" y="377.500" width="8.800" height="2.600"/><path d="M1000.400,380.600 H1009.600 V384.600 H1007.800 V382.800 H1006.900 V384.600 H1003.700 V383 H1002.700 V384.600 H1000.400 Z"/></g>
 <path d="M998.700,387 C1001,385.800 1003,387.900 1005.300,387 C1007.400,386.200 1009.200,387.600 1011.400,387" stroke="#f4f4f4" stroke-width="1" fill="none"/>
 <!-- undo / redo -->
 <path d="M1003.500,410 V412.300 C1007,412.300 1009.500,414.500 1009.900,418.700 C1008.300,416.300 1006.300,415.700 1003.500,415.800 V418.200 L998.800,414 Z" fill="#555"/>
 <path transform="rotate(180 1004.400 428.400)" d="M1003.500,410 V412.300 C1007,412.300 1009.500,414.500 1009.900,418.700 C1008.300,416.300 1006.300,415.700 1003.500,415.800 V418.200 L998.800,414 Z" fill="#555"/>
</svg>

</div></div>
</body>
</html>
